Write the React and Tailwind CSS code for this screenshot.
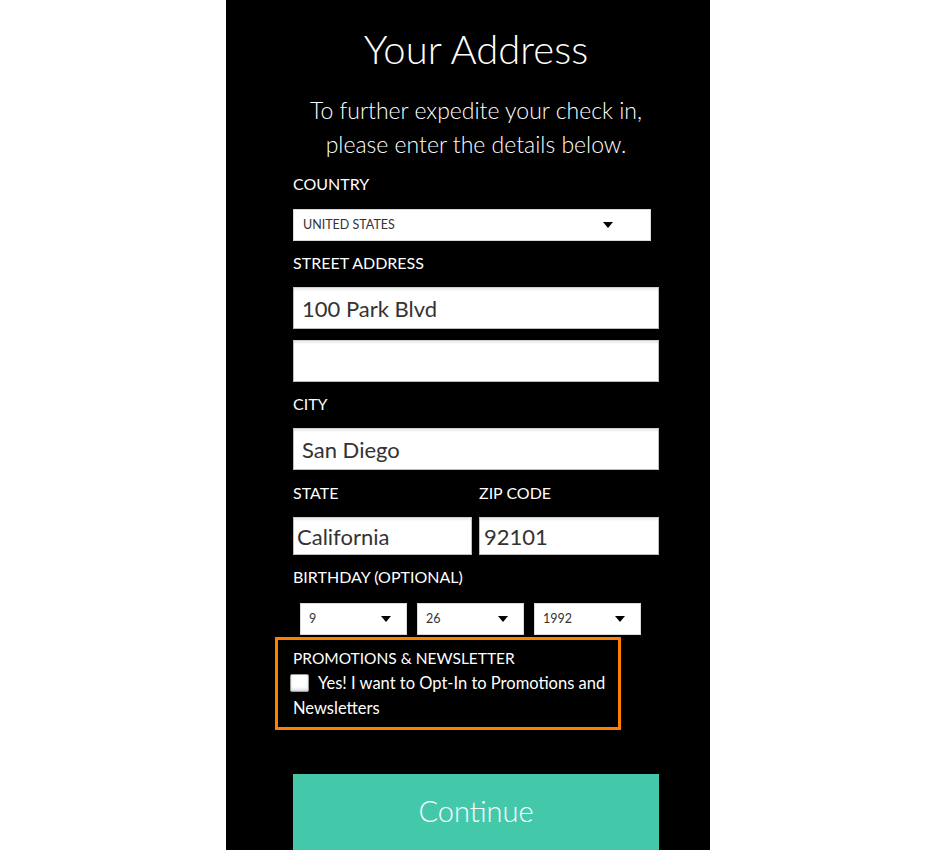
import React from 'react';

const font = { fontFamily: '"Source Sans Pro", Lato, "Open Sans", sans-serif' };

function Caret() {
  return (
    <svg width="10" height="6" viewBox="0 0 10 6" className="shrink-0">
      <path d="M0 0h10L5 6z" fill="#000" />
    </svg>
  );
}

function SelectBox({ value, className }) {
  return (
    <div className={`flex items-center justify-between bg-white border border-[#d9d9d9] text-[#333] text-[12.5px] ${className}`}>
      <span>{value}</span>
      <Caret />
    </div>
  );
}

function TextBox({ value, className }) {
  return (
    <div className={`flex items-center bg-white border border-[#bdbdbd] border-t-[#cfcfcf] shadow-[inset_0_3px_2px_-1px_rgba(0,0,0,0.08)] text-[#333] text-[22px] ${className}`}>
      {value}
    </div>
  );
}

function Label({ children, className = '' }) {
  return <div className={`text-white text-[16px] leading-[20px] ${className}`}>{children}</div>;
}

export default function App() {
  return (
    <div className="w-full h-[850px] bg-white flex justify-center" style={font}>
      <div className="w-[484px] h-[850px] bg-black overflow-hidden pl-[67px] pr-[51px]">
        <h1 className="text-white text-[40px] font-light leading-[48px] text-center pt-[25px]">Your Address</h1>
        <p className="text-white text-[23px] font-light leading-[34px] text-center mt-[20px]">
          To further expedite your check in,<br />please enter the details below.
        </p>

        <Label className="mt-[13px]">COUNTRY</Label>
        <SelectBox value="UNITED STATES" className="mt-[15px] h-[32px] w-[358px] pl-[9px] pr-[37px]" />

        <Label className="mt-[12px]">STREET ADDRESS</Label>
        <TextBox value="100 Park Blvd" className="mt-[14px] h-[42px] px-[8px]" />
        <TextBox value="" className="mt-[11px] h-[42px] px-[8px]" />

        <Label className="mt-[12px]">CITY</Label>
        <TextBox value="San Diego" className="mt-[14px] h-[42px] px-[8px]" />

        <div className="flex gap-[7px] mt-[13px]">
          <div className="w-[179px]">
            <Label>STATE</Label>
            <TextBox value="California" className="mt-[14px] h-[38px] px-[3px]" />
          </div>
          <div className="flex-1">
            <Label>ZIP CODE</Label>
            <TextBox value="92101" className="mt-[14px] h-[38px] px-[4px]" />
          </div>
        </div>

        <Label className="mt-[12px]">BIRTHDAY (OPTIONAL)</Label>
        <div className="flex gap-[10px] ml-[7px] mt-[16px]">
          <SelectBox value="9" className="h-[32px] w-[107px] pl-[8px] pr-[15px]" />
          <SelectBox value="26" className="h-[32px] w-[107px] pl-[8px] pr-[15px]" />
          <SelectBox value="1992" className="h-[32px] w-[107px] pl-[8px] pr-[15px]" />
        </div>

        <div className="ml-[-18px] w-[346px] h-[93px] mt-[2px] border-[3px] border-[#ff8000] pl-[15px] pt-[8px]">
          <div className="text-white text-[15.5px] leading-[20px]">PROMOTIONS &amp; NEWSLETTER</div>
          <div className="text-white text-[16.5px] leading-[25px] mt-[3px] -ml-[3px]">
            <span className="inline-block align-[-3px] w-[19px] h-[18px] bg-white rounded-[2px] border border-[#9a9a9a] shadow-[inset_0_-2px_3px_rgba(0,0,0,0.15)] mr-[9px]" />
            Yes! I want to Opt-In to Promotions and
            <br />
            <span className="ml-[3px]">Newsletters</span>
          </div>
        </div>

        <button className="mt-[44px] w-full h-[78px] bg-[#44c8aa] text-white text-[29px] font-light pb-[4px]">
          Continue
        </button>
      </div>
    </div>
  );
}
